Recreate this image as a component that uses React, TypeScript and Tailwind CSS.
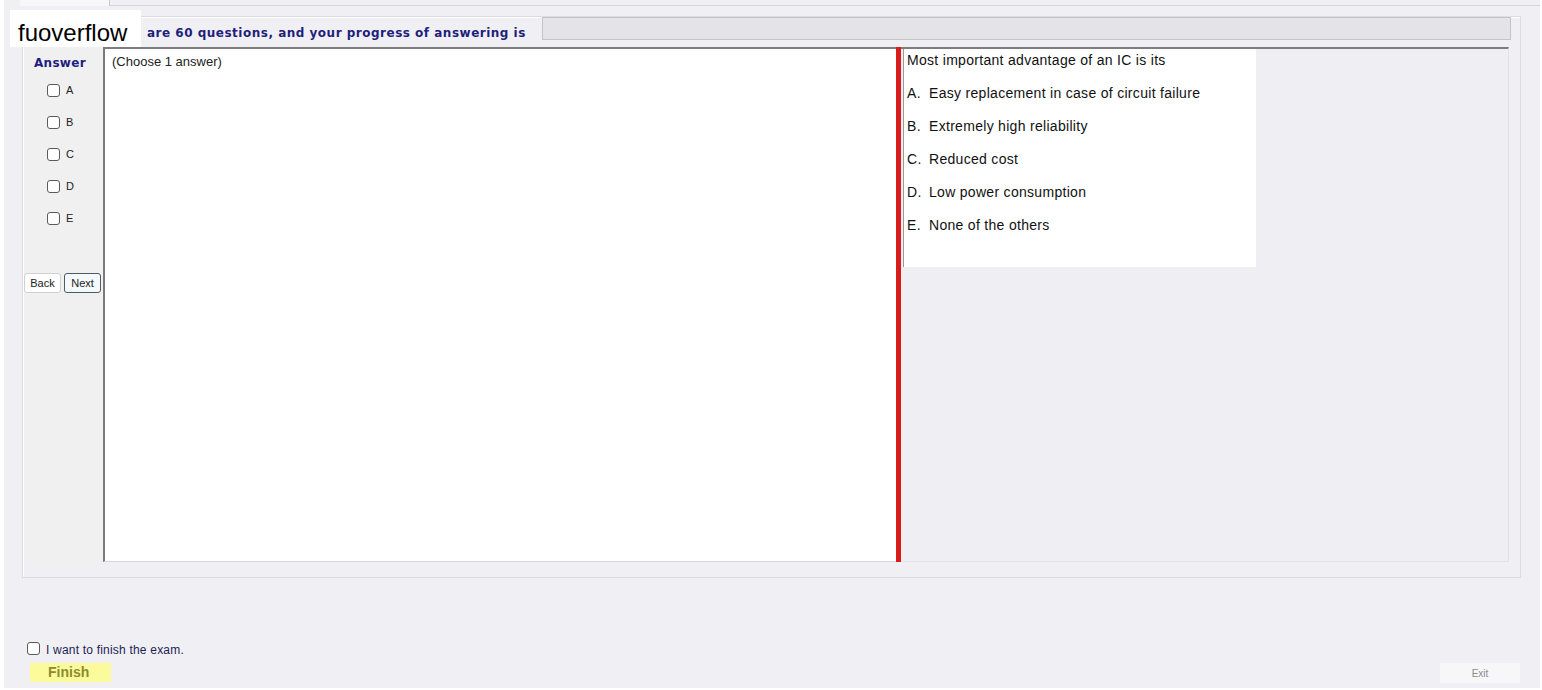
import React from "react";

const options = [
  { key: "A", text: "Easy replacement in case of circuit failure" },
  { key: "B", text: "Extremely high reliability" },
  { key: "C", text: "Reduced cost" },
  { key: "D", text: "Low power consumption" },
  { key: "E", text: "None of the others" },
];

function Box() {
  return <span className="inline-block w-[13px] h-[13px] rounded-[3px] border border-[#5a5a5a] bg-white" />;
}

export default function App() {
  return (
    <div className="relative h-[690px] w-full bg-white font-['Liberation_Sans',Arial,sans-serif]">
      {/* watermark logo */}
      <div className="absolute left-[10px] top-[10px] z-10 flex h-[37px] w-[131px] items-center bg-white pl-[8px] pt-[8px] text-[24px] leading-none text-black">
        fuoverflow
      </div>

      <div className="ml-[4px] mr-[2px] flex h-[688px] flex-col bg-[#f0f0f4]">
        {/* tab strip */}
        <div className="flex h-[6px]">
          <div className="ml-[16px] w-[90px] border-r border-[#c8c8cc] bg-[#f7f7f9]" />
          <div className="flex-1 border-b border-[#d6d6da]" />
        </div>

        {/* main frame */}
        <div className="ml-[18px] mt-[10px] flex h-[562px] w-[1499px] flex-col border border-[#dcdce2] shadow-[inset_1px_1px_0_#ffffff]">
          {/* header */}
          <div className="flex h-[30px] items-start">
            <div className="mt-[9px] w-[519px] pl-[124px] font-['DejaVu_Sans',Verdana,sans-serif] text-[12px] font-bold leading-[14px] tracking-[0.5px] text-[#1f1f7c]">
              are 60 questions, and your progress of answering is
            </div>
            <div className="h-[23px] w-[969px] border border-[#c4c4c8] bg-[#e4e4e6]" />
          </div>

          {/* content */}
          <div className="flex h-[515px]">
            <div className="ml-[1px] flex w-[79px] flex-col bg-[#f0f0f0]">
              <div className="mt-[9px] pl-[10px] font-['DejaVu_Sans',Verdana,sans-serif] text-[12px] font-bold leading-[15px] tracking-[0.3px] text-[#1f1f80]">
                Answer
              </div>
              <div className="mt-[13px] flex flex-col gap-[19px] pl-[23px]">
                {options.map((o) => (
                  <div key={o.key} className="flex h-[13px] items-center gap-[6px]">
                    <Box />
                    <span className="text-[11px] leading-none text-[#222]">{o.key}</span>
                  </div>
                ))}
              </div>
              <div className="mt-[48px] flex gap-[3px]">
                <button className="h-[20px] w-[37px] rounded-[3px] border border-[#cfcfcf] bg-white text-[11px] text-[#222]">
                  Back
                </button>
                <button className="h-[20px] w-[37px] rounded-[3px] border border-[#4f5a66] bg-[#f4f9fc] text-[11px] text-[#222]">
                  Next
                </button>
              </div>
            </div>

            <div className="w-[793px] border-l-2 border-t-2 border-b border-l-[#7a7a7a] border-t-[#7d7d7d] border-b-[#d8d8dc] bg-white pl-[7px] pt-[5px]">
              <div className="text-[13px] leading-[15px] text-[#222]">(Choose 1 answer)</div>
            </div>

            <div className="w-[5px] bg-[#d81b1b]" />

            <div className="w-[608px] border-t-2 border-r border-b border-t-[#7d7d7d] border-r-[#e2e2e6] border-b-[#e2e2e6] bg-[#efeff3] pl-[2px]">
              <div className="h-[218px] w-[353px] border-l border-[#9a9a9a] bg-white pl-[3px] pt-[3px] text-[14px] leading-[16px] tracking-[0.3px] text-[#111]">
                <div>Most important advantage of an IC is its</div>
                <div className="mt-[17px] flex flex-col gap-[17px]">
                  {options.map((o) => (
                    <div key={o.key} className="flex">
                      <span className="w-[22px]">{o.key}.</span>
                      <span>{o.text}</span>
                    </div>
                  ))}
                </div>
              </div>
            </div>
          </div>
        </div>

        {/* bottom */}
        <div className="mt-[62px] flex items-center gap-[6px] pl-[23px]">
          <Box />
          <span className="mt-[3px] text-[12px] leading-[14px] tracking-[0.2px] text-[#1d1d55]">I want to finish the exam.</span>
        </div>
        <div className="mt-[6px] flex items-start justify-between pl-[26px] pr-[20px]">
          <div className="flex h-[19px] w-[81px] items-center bg-[#fbfb9c] pl-[18px] text-[14px] font-bold text-[#8b8b2e]">
            Finish
          </div>
          <div className="flex h-[20px] w-[80px] items-center justify-center bg-[#f7f7fa] text-[10px] text-[#8a8a8a]">
            Exit
          </div>
        </div>
      </div>
    </div>
  );
}
